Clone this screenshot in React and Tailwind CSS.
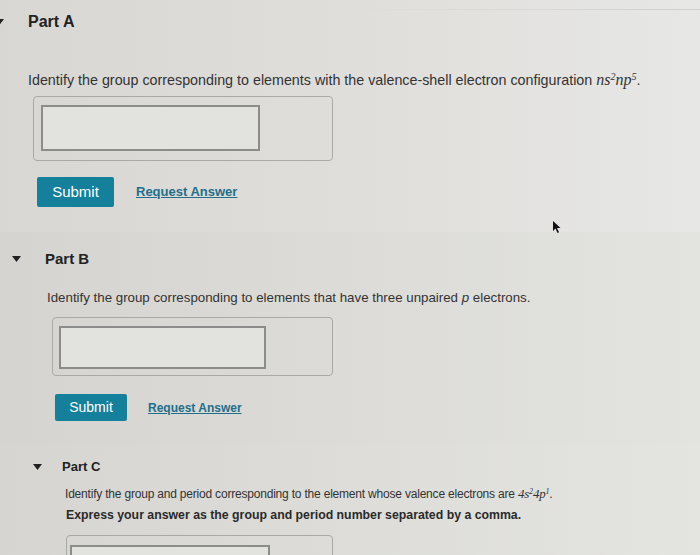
import React from 'react';

const sans = { fontFamily: '"Liberation Sans", Arial, sans-serif' };

function Caret() {
  return (
    <svg width="9" height="6" viewBox="0 0 9 6" className="shrink-0">
      <path d="M0 0 L9 0 L4.5 6 Z" fill="#222" />
    </svg>
  );
}

function Math({ children }) {
  return (
    <span className="italic" style={{ fontFamily: '"Liberation Serif", "Times New Roman", serif' }}>
      {children}
    </span>
  );
}

function AnswerBox({ outer, inner }) {
  return (
    <div className={`rounded-[4px] border border-[#a9a9a6] ${outer}`}>
      <div className={`border-2 border-[#8c8c8a] bg-[#e2e2df] ${inner}`} />
    </div>
  );
}

function Actions({ btn, link, gap }) {
  return (
    <div className={`flex items-center ${gap}`}>
      <button className={`rounded-[2px] bg-[#15809c] text-white ${btn}`}>Submit</button>
      <a className={`font-bold text-[#226f8b] underline ${link}`}>Request Answer</a>
    </div>
  );
}

export default function App() {
  return (
    <div
      className="relative h-[555px] w-[700px] overflow-hidden bg-gradient-to-r from-[#d8d7d3] via-[#dfdedb] to-[#e7e7e5] text-[#333]"
      style={sans}
    >
      <div className="h-px w-full bg-gradient-to-r from-transparent via-[#d0d0cd] to-[#cfcfcc] absolute top-[9px] left-[330px]" />

      {/* Part A */}
      <section className="pl-[28px]">
        <div className="mt-[12px] flex h-[20px] items-center">
          <div className="-ml-[33px] mr-[24px]"><Caret /></div>
          <h2 className="text-[16px] font-bold text-[#222]">Part A</h2>
        </div>
        <p className="mt-[38px] h-[20px] text-[14.3px] leading-[20px]">
          Identify the group corresponding to elements with the valence-shell electron configuration{' '}
          <Math>
            <span className="text-[16px]">ns</span><sup className="text-[10px]">2</sup>
            <span className="text-[16px]">np</span><sup className="text-[10px]">5</sup>
          </Math>
          .
        </p>
        <div className="ml-[5px] mt-[6px]">
          <AnswerBox outer="h-[65px] w-[300px] pl-[7px] pt-[8px]" inner="h-[46px] w-[219px]" />
        </div>
        <div className="ml-[9px] mt-[16px]">
          <Actions btn="h-[30px] w-[77px] text-[15px]" link="text-[13px]" gap="gap-[22px]" />
        </div>
      </section>

      {/* Part B */}
      <section className="mt-[25px] bg-gradient-to-r from-[#d5d4d0] to-[#e3e3e0] pb-[24px]">
        <div className="flex h-[20px] items-center pt-[17px] box-content pl-[12px]">
          <Caret />
          <h2 className="ml-[24px] text-[15px] font-bold text-[#222]">Part B</h2>
        </div>
        <p className="ml-[47px] mt-[19px] h-[20px] text-[13.3px] leading-[20px]">
          Identify the group corresponding to elements that have three unpaired <i>p</i> electrons.
        </p>
        <div className="ml-[52px] mt-[9px]">
          <AnswerBox outer="h-[59px] w-[281px] pl-[6px] pt-[8px]" inner="h-[43px] w-[207px]" />
        </div>
        <div className="ml-[55px] mt-[18px]">
          <Actions btn="h-[27px] w-[72px] text-[14px]" link="text-[12px]" gap="gap-[21px]" />
        </div>
      </section>

      {/* Part C */}
      <section className="bg-gradient-to-r from-[#d6d5d1] to-[#e4e4e1]">
        <div className="flex h-[20px] items-center pt-[12px] box-content pl-[33px]">
          <Caret />
          <h2 className="ml-[20px] text-[13px] font-bold text-[#222]">Part C</h2>
        </div>
        <p className="ml-[65px] mt-[8px] h-[18px] text-[12px] leading-[18px] tracking-[-0.2px]">
          Identify the group and period corresponding to the element whose valence electrons are{' '}
          <Math>
            <span className="text-[13px]">4s</span><sup className="text-[8px]">2</sup>
            <span className="text-[13px]">4p</span><sup className="text-[8px]">1</sup>
          </Math>
          .
        </p>
        <p className="ml-[66px] mt-[3px] h-[18px] text-[12.3px] font-bold leading-[18px] text-[#2a2a2a]">
          Express your answer as the group and period number separated by a comma.
        </p>
        <div className="ml-[66px] mt-[11px]">
          <AnswerBox outer="h-[60px] w-[267px] pl-[3px] pt-[9px]" inner="h-[42px] w-[200px]" />
        </div>
      </section>

      {/* mouse cursor */}
      <svg className="absolute left-[553px] top-[221px]" width="8" height="12" viewBox="0 0 8 12">
        <path d="M0 0 L0 10 L2.5 7.5 L4.5 12 L6 11.3 L4 7 L7.5 7 Z" fill="#111" />
      </svg>
    </div>
  );
}
